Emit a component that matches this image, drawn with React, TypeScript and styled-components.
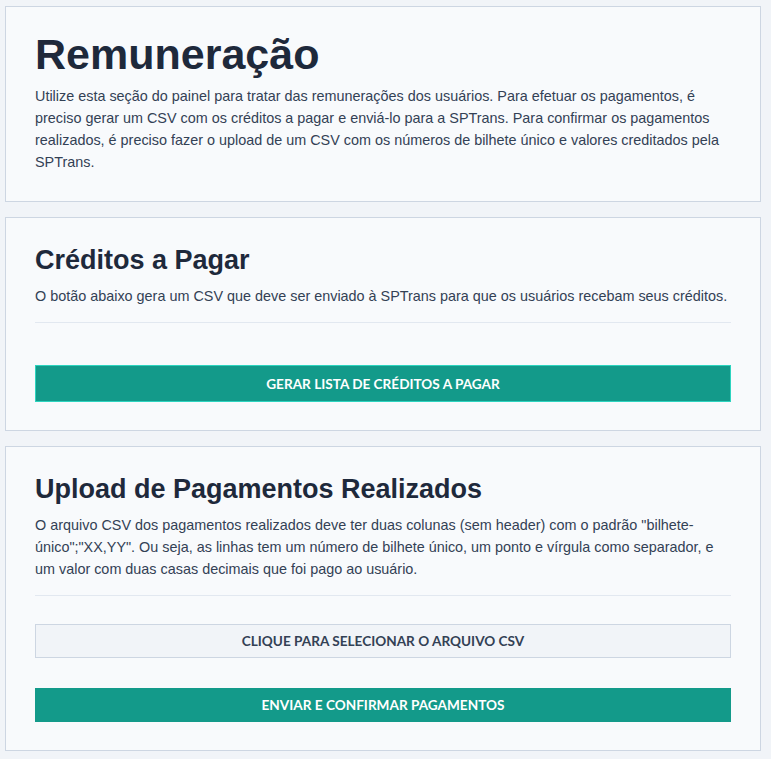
import React from 'react'
import styled, { createGlobalStyle } from 'styled-components'

const GlobalStyle = createGlobalStyle`
	* {
		box-sizing: border-box;
	}

	body {
		margin: 0;
		background-color: #f1f4f8;
		font-family: 'Liberation Sans', Arial, sans-serif;
	}
`

const Page = styled.main`
	display: flex;
	flex-direction: column;
	gap: 15px;
	padding: 6px 10px 9px 5px;
`

const Card = styled.section<{ $top: number }>`
	display: flex;
	flex-direction: column;
	padding: ${({ $top }) => $top}px 29px 28px;
	background-color: #f8fafc;
	border: 1px solid #cdd6e2;
`

const Title = styled.h1<{ $size: number }>`
	margin: 0;
	font-size: ${({ $size }) => $size}px;
	line-height: ${({ $size }) => Math.round($size * 1.15)}px;
	font-weight: 700;
	color: #1e293b;
`

const Text = styled.p<{ $gap: number }>`
	margin: ${({ $gap }) => $gap}px 0 0;
	font-size: 14.4px;
	line-height: 22px;
	color: #334155;
`

const Divider = styled.hr`
	margin: 15px 0 0;
	border: 0;
	border-top: 1px solid #e2e8f0;
`

const Actions = styled.div<{ $top: number }>`
	display: flex;
	flex-direction: column;
	gap: 30px;
	padding-top: ${({ $top }) => $top}px;
`

const Button = styled.button<{ $variant?: 'primary' | 'secondary'; $focused?: boolean; $height: number }>`
	display: flex;
	align-items: center;
	justify-content: center;
	width: 100%;
	height: ${({ $height }) => $height}px;
	padding: 0;
	font-family: Lato, 'Liberation Sans', sans-serif;
	font-size: 13.6px;
	font-weight: 700;
	text-transform: uppercase;
	cursor: pointer;
	color: ${({ $variant }) => ($variant === 'secondary' ? '#334155' : '#ffffff')};
	background-color: ${({ $variant }) => ($variant === 'secondary' ? '#f1f4f8' : '#139a8a')};
	border: 1px solid
		${({ $variant, $focused }) => ($variant === 'secondary' ? '#cdd6e2' : $focused ? '#2dd4bf' : '#139a8a')};
`

export default function App() {
	return (
		<>
			<GlobalStyle />
			<Page>
				<Card $top={23}>
					<Title $size={43}>Remuneração</Title>
					<Text $gap={6}>
						Utilize esta seção do painel para tratar das remunerações dos usuários. Para efetuar os pagamentos, é preciso gerar um CSV com os
						créditos a pagar e enviá-lo para a SPTrans. Para confirmar os pagamentos realizados, é preciso fazer o upload de um CSV com os
						números de bilhete único e valores creditados pela SPTrans.
					</Text>
				</Card>

				<Card $top={27}>
					<Title as="h2" $size={27}>
						Créditos a Pagar
					</Title>
					<Text $gap={9}>O botão abaixo gera um CSV que deve ser enviado à SPTrans para que os usuários recebam seus créditos.</Text>
					<Divider />
					<Actions $top={42}>
						<Button $focused $height={37}>
							Gerar lista de créditos a pagar
						</Button>
					</Actions>
				</Card>

				<Card $top={27}>
					<Title as="h2" $size={27}>
						Upload de Pagamentos Realizados
					</Title>
					<Text $gap={9}>
						O arquivo CSV dos pagamentos realizados deve ter duas colunas (sem header) com o padrão "bilhete-único";"XX,YY". Ou seja, as linhas
						tem um número de bilhete único, um ponto e vírgula como separador, e um valor com duas casas decimais que foi pago ao usuário.
					</Text>
					<Divider />
					<Actions $top={28}>
						<Button $variant="secondary" $height={34}>
							Clique para selecionar o arquivo CSV
						</Button>
						<Button $height={34}>Enviar e confirmar pagamentos</Button>
					</Actions>
				</Card>
			</Page>
		</>
	)
}
